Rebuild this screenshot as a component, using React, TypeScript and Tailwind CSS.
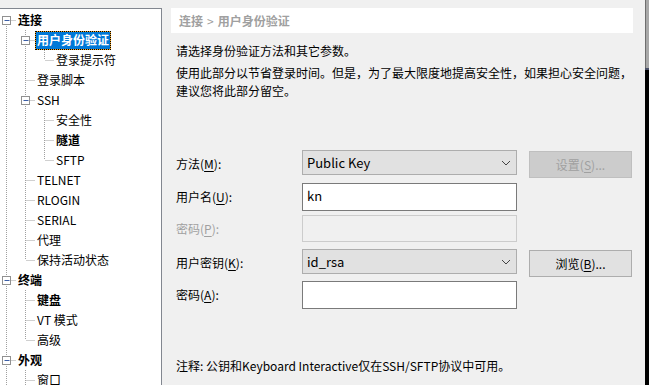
type TreeNode = {
  label: string
  bold?: boolean
  selected?: boolean
  more?: boolean
  children?: TreeNode[]
}

type Row = {
  node: TreeNode
  level: number
  ancestors: boolean[]
  hasNext: boolean
  first: boolean
}

const tree: TreeNode[] = [
  {
    label: "连接",
    bold: true,
    children: [
      { label: "用户身份验证", bold: true, selected: true, children: [{ label: "登录提示符" }] },
      { label: "登录脚本" },
      {
        label: "SSH",
        children: [{ label: "安全性" }, { label: "隧道", bold: true }, { label: "SFTP" }],
      },
      { label: "TELNET" },
      { label: "RLOGIN" },
      { label: "SERIAL" },
      { label: "代理" },
      { label: "保持活动状态" },
    ],
  },
  {
    label: "终端",
    bold: true,
    children: [{ label: "键盘", bold: true }, { label: "VT 模式" }, { label: "高级" }],
  },
  { label: "外观", bold: true, more: true, children: [{ label: "窗口", more: true }] },
]

const flatten = (nodes: TreeNode[], level: number, ancestors: boolean[], out: Row[]) => {
  nodes.forEach((node, i) => {
    const hasNext = i < nodes.length - 1 || !!node.more
    out.push({ node, level, ancestors, hasNext, first: level === 0 && i === 0 })
    if (node.children) flatten(node.children, level + 1, [...ancestors, hasNext], out)
  })
  return out
}

const rows = flatten(tree, 0, [], [])

const TreeRow = ({ row }: { row: Row }) => {
  const { node, level, ancestors, hasNext, first } = row
  const cx = level * 19 + 9.5
  return (
    <div className="flex h-[20px] items-center">
      <svg width={(level + 1) * 19} height={20} className="shrink-0">
        <g stroke="#a0a0a0" strokeWidth="1" strokeDasharray="1 1">
          {ancestors.map((cont, c) =>
            cont ? <line key={c} x1={c * 19 + 9.5} y1={0} x2={c * 19 + 9.5} y2={20} /> : null
          )}
          <line x1={cx} y1={first ? 10 : 0} x2={cx} y2={hasNext ? 20 : 10} />
          <line x1={cx + 1} y1={10.5} x2={level * 19 + 19} y2={10.5} />
        </g>
        {node.children && (
          <g>
            <rect x={cx - 4} y={6.5} width={8} height={8} fill="#fff" stroke="#919191" />
            <line x1={cx - 2} y1={10.5} x2={cx + 3} y2={10.5} stroke="#3b5ea6" />
          </g>
        )}
      </svg>
      {node.selected ? (
        <span className="bg-[#f5a623]">
          <span className="flex h-[19px] items-center border border-dotted border-black bg-[#0078d7] bg-clip-padding px-[1px] font-bold text-white">
            {node.label}
          </span>
        </span>
      ) : (
        <span
          className={`flex h-[19px] items-center whitespace-nowrap border border-transparent px-[1px] ${
            node.bold ? "font-bold" : ""
          }`}
        >
          {node.label}
        </span>
      )}
    </div>
  )
}

const Chevron = () => (
  <svg width="10" height="6" viewBox="0 0 10 6" className="shrink-0">
    <path d="M1 1 L5 5 L9 1" fill="none" stroke="#444" strokeWidth="1" />
  </svg>
)

const Label = ({ text, mn, disabled }: { text: string; mn: string; disabled?: boolean }) => (
  <div className={`w-[126px] shrink-0 self-center ${disabled ? "text-[#a0a0a0]" : ""}`}>
    {text}(<span className="underline underline-offset-2">{mn}</span>):
  </div>
)

const Select = ({ value }: { value: string }) => (
  <div className="flex h-[25px] w-[215px] shrink-0 items-center justify-between border border-[#adadad] bg-[#e1e1e1] pl-[4px] pr-[5px] text-[13px]">
    <span>{value}</span>
    <Chevron />
  </div>
)

const Button = ({ text, mn, disabled }: { text: string; mn: string; disabled?: boolean }) => (
  <div
    className={`ml-[12px] mt-[1px] flex h-[27px] w-[103px] items-center justify-center border ${
      disabled ? "border-[#bfbfbf] bg-[#cccccc] text-[#a0a0a0]" : "border-[#adadad] bg-[#e1e1e1]"
    }`}
  >
    {text}(<span className="underline underline-offset-2">{mn}</span>)...
  </div>
)

export default function App() {
  return (
    <div className="flex h-[385px] w-[649px] overflow-hidden bg-[#f0f0f0] font-['Noto_Sans_CJK_SC',sans-serif] text-[12px] text-black">
      <div className="-ml-[4px] mt-[8px] h-[400px] w-[166px] shrink-0 border-l border-r border-t border-[#828790] bg-white pt-[1px]">
        {rows.map((row, i) => (
          <TreeRow key={i} row={row} />
        ))}
      </div>

      <div className="flex min-w-0 flex-1 flex-col">
        <div className="ml-[9px] mr-[12px] mt-[8px] flex h-[25px] items-center bg-white pl-[8px] font-bold text-[#a0a0a0]">
          连接 <span className="mx-[4px] font-normal">&gt;</span> 用户身份验证
        </div>

        <div className="mt-[9px] whitespace-nowrap pl-[14px] leading-[18px]">
          <p>请选择身份验证方法和其它参数。</p>
          <p className="mt-[4px]">
            使用此部分以节省登录时间。但是，为了最大限度地提高安全性，如果担心安全问题，
            <br />
            建议您将此部分留空。
          </p>
        </div>

        <div className="mt-[50px] flex flex-col pl-[14px]">
          <div className="flex items-start">
            <Label text="方法" mn="M" />
            <Select value="Public Key" />
            <Button text="设置" mn="S" disabled />
          </div>
          <div className="mt-[5px] flex">
            <Label text="用户名" mn="U" />
            <div className="flex h-[28px] w-[215px] items-start border border-[#7a7a7a] bg-white pl-[4px] pt-[2px] text-[13px]">
              kn
            </div>
          </div>
          <div className="mt-[4px] flex">
            <Label text="密码" mn="P" disabled />
            <div className="h-[27px] w-[215px] border border-[#cccccc] bg-[#f0f0f0]" />
          </div>
          <div className="mt-[7px] flex items-start">
            <Label text="用户密钥" mn="K" />
            <Select value="id_rsa" />
            <Button text="浏览" mn="B" />
          </div>
          <div className="mt-[4px] flex">
            <Label text="密码" mn="A" />
            <div className="h-[28px] w-[215px] border border-[#7a7a7a] bg-white" />
          </div>
        </div>

        <p className="mt-[48px] whitespace-nowrap pl-[14px] leading-[18px]">
          注释: 公钥和Keyboard Interactive仅在SSH/SFTP协议中可用。
        </p>
      </div>

      <div className="flex w-[4px] shrink-0 flex-col">
        <div className="h-[68px] border-l border-[#6e6e6e] bg-[#a8a8a8]" />
        <div className="h-[2px] bg-[#4a5068]" />
        <div className="flex-1 bg-black" />
      </div>
    </div>
  )
}
